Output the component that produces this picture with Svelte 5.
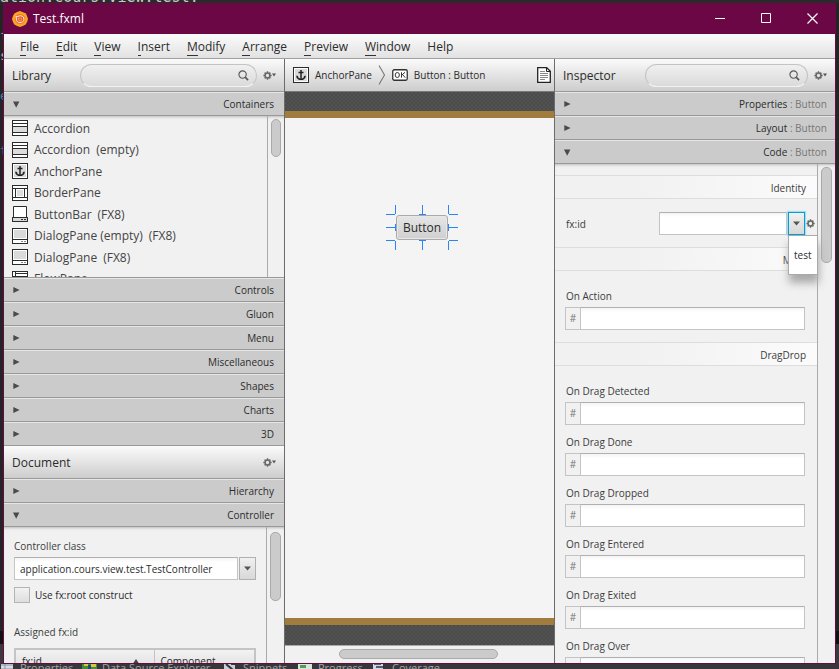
<script>
  const menus = ['File', 'Edit', 'View', 'Insert', 'Modify', 'Arrange', 'Preview', 'Window', 'Help'];
  const containers = [
    { name: 'Accordion', note: '', icon: 'accordion' },
    { name: 'Accordion', note: '(empty)', icon: 'accordion' },
    { name: 'AnchorPane', note: '', icon: 'anchor' },
    { name: 'BorderPane', note: '', icon: 'border' },
    { name: 'ButtonBar', note: '(FX8)', icon: 'bar' },
    { name: 'DialogPane (empty)', note: '(FX8)', icon: 'dialog' },
    { name: 'DialogPane', note: '(FX8)', icon: 'dialog' },
    { name: 'FlowPane', note: '', icon: 'flow' }
  ];
  const categories = ['Controls', 'Gluon', 'Menu', 'Miscellaneous', 'Shapes', 'Charts', '3D'];
  const dragEvents = ['Detected', 'Done', 'Dropped', 'Entered', 'Exited', 'Over'];
  let controllerClass = $state('application.cours.view.test.TestController');
  let fxId = $state('');
</script>

{#snippet gear()}
  <svg width="9" height="9" viewBox="0 0 10 10">
    <circle cx="5" cy="5" r="2.7" fill="none" stroke="#666" stroke-width="1.7" />
    <path d="M5 .4v1.8M5 7.8v1.8M.4 5h1.8M7.8 5h1.8M1.8 1.8l1.2 1.2M7 7l1.2 1.2M8.2 1.8L7 3M3 7L1.8 8.2" stroke="#666" stroke-width="1.6" />
  </svg>
{/snippet}

{#snippet gearMenu(label)}
  <button class="gear" aria-label={label}>
    {@render gear()}
    <svg width="4" height="4" viewBox="0 0 4 4"><path d="M0 .5h4L2 3.5z" fill="#555" /></svg>
  </button>
{/snippet}

{#snippet search(label)}
  <div class="search">
    <input type="search" aria-label={label} />
    <svg width="11" height="11" viewBox="0 0 12 12" fill="none" stroke="#555">
      <circle cx="5" cy="5" r="4" stroke-width="1.2" />
      <path d="M7.8 7.8L11 11" stroke-width="1.8" />
    </svg>
  </div>
{/snippet}

{#snippet section(title, open, suffix)}
  <h2 class="section">
    <button aria-expanded={open}>
      <svg width="7" height="7" viewBox="0 0 7 7">
        <path d={open ? 'M0 .5h6.4L3.2 6.7z' : 'M.3 0v6L6.6 3z'} fill="#4a4a4a" />
      </svg>
      <span>{title}{#if suffix}<span class="suffix">&nbsp;: {suffix}</span>{/if}</span>
    </button>
  </h2>
{/snippet}

{#snippet icon(kind)}
  <svg class="icon" width="16" height="16" viewBox="0 0 16 16">
    {#if kind === 'ok'}
      <rect x=".75" y="2.75" width="14.5" height="10.5" rx="1.5" fill="#fff" stroke="#333" stroke-width="1.3" />
      <ellipse cx="5.3" cy="8" rx="2.1" ry="2.5" fill="none" stroke="#333" />
      <path d="M9.5 5.3v5.4M13 5.3L9.7 8.2M10.6 7.6l2.7 3.1" fill="none" stroke="#333" />
    {:else}
      <rect x=".5" y=".5" width="15" height="15" fill="#fff" stroke="#2b2b2b" />
      {#if kind === 'accordion'}
        <path d="M1 6.5h14v6H1z" fill="#dcdcdc" />
        <path d="M1 3.5h14M1 6.5h14M1 12.5h14" stroke="#2b2b2b" />
      {:else if kind === 'anchor'}
        <path d="M2 2h12v12H2z" fill="#dadada" />
        <path d="M8 3v9M5.5 5.5h5" stroke="#222" stroke-width="1.5" />
        <path d="M4 9.5c.5 1.9 1.9 2.9 4 2.9s3.5-1 4-2.9" fill="none" stroke="#222" stroke-width="1.3" />
        <path d="M3.2 10.6l.5-2.3 1.8 1.5zM12.8 10.6l-.5-2.3-1.8 1.5z" fill="#222" />
      {:else if kind === 'border'}
        <path d="M5 5h6v6H5z" fill="#dcdcdc" />
        <path d="M1 3.5h14M1 12.5h14M3.5 3.5v9M12.5 3.5v9" stroke="#2b2b2b" />
      {:else if kind === 'bar'}
        <path d="M0 0h16v11H0z" fill="#f2f2f2" />
        <path d="M1.5 11V.5h13V11" fill="#fff" stroke="#2b2b2b" />
        <path d="M.5 11.5h15v4H.5z" fill="#d8d8d8" stroke="#2b2b2b" />
        <path d="M9 13.5h2M12 13.5h2" stroke="#2b2b2b" />
      {:else if kind === 'dialog'}
        <path d="M2 2h12v8H2z" fill="#dadada" />
        <path d="M1 11.5h14" stroke="#2b2b2b" />
        <path d="M9 13.5h2M12 13.5h2" stroke="#888" />
      {:else}
        <path d="M3.5 1v14M1 5.5h14M3.5 2.5h12M10.5 5v10" stroke="#2b2b2b" />
      {/if}
    {/if}
  </svg>
{/snippet}

{#snippet handler(label, id)}
  <div class="handler">
    <label for={id}>{label}</label>
    <div class="hash"><span>#</span><input {id} type="text" /></div>
  </div>
{/snippet}

<div class="desktop">
  <div class="editor-line">ation.cours.view.test:</div>
  <div class="edge edge-left"><span>f</span><span>s</span><span class="blue">e</span><span class="blue">t</span></div>

  <div class="window">
    <header class="titlebar">
      <svg width="16" height="16" viewBox="0 0 16 16">
        <path d="M8 0l3 1.2 3 1.4 1.2 2.9L16 8l-.8 2.8-1.5 2.7-2.9 1.4L8 16l-2.9-1.1-2.8-1.4-1.4-2.8L0 8l.9-2.7 1.4-2.8 2.8-1.4z" fill="#f7a823" />
        <circle cx="8" cy="8" r="5.2" fill="#f47b22" />
        <path d="M4 5.5c1.5.9 2.6-.8 4.6-.7 2.2.1 3.5 1.7 3.3 3.5-.2 2-1.9 3.4-4 3.3-2.2-.1-3.6-1.6-3.4-3.7z" fill="#f0532a" stroke="#fff0dc" stroke-width="1" />
        <path d="M6.5 7l3 .3-.4 2.6-2.2-.2z" fill="#e5401c" stroke="#ffd9b8" stroke-width=".6" />
      </svg>
      <h1>Test.fxml</h1>
      <button aria-label="Minimize"><svg width="11" height="11" viewBox="0 0 11 11"><path d="M0 5.5h10" stroke="#fff" /></svg></button>
      <button aria-label="Maximize"><svg width="11" height="11" viewBox="0 0 11 11"><path d="M.5.5h9v9h-9z" fill="none" stroke="#fff" /></svg></button>
      <button aria-label="Close"><svg width="11" height="11" viewBox="0 0 11 11"><path d="M.5.5l10 10M10.5.5l-10 10" stroke="#fff" stroke-width="1.2" /></svg></button>
    </header>

    <nav class="menubar">
      {#each menus as menu}
        <button><span class="key" class:plain={menu === 'Help'}>{menu[0]}</span>{menu.slice(1)}</button>
      {/each}
    </nav>

    <main>
      <div class="left">
        <section class="panel">
          <div class="bar">
            <h2>Library</h2>
            {@render search('Search library')}
            {@render gearMenu('Library options')}
          </div>
          {@render section('Containers', true)}
          <div class="scroller library">
            <ul>
              {#each containers as item}
                <li>{@render icon(item.icon)}<span>{item.name}</span><span>{item.note}</span></li>
              {/each}
            </ul>
            <div class="track"><div class="thumb"></div></div>
          </div>
          {#each categories as category}
            {@render section(category, false)}
          {/each}
        </section>

        <section class="panel">
          <div class="bar">
            <h2>Document</h2>
            {@render gearMenu('Document options')}
          </div>
          {@render section('Hierarchy', false)}
          {@render section('Controller', true)}
          <div class="scroller document">
            <div class="controller">
              <label for="controller-class">Controller class</label>
              <div class="combo">
                <input id="controller-class" type="text" bind:value={controllerClass} />
                <button aria-label="Choose controller class"><svg width="7" height="5" viewBox="0 0 7 5"><path d="M0 .5h7L3.5 4.5z" fill="#555" /></svg></button>
              </div>
              <label class="check"><input type="checkbox" />Use fx:root construct</label>
              <p>Assigned fx:id</p>
              <table>
                <thead>
                  <tr>
                    <th><span>fx:id</span><svg width="8" height="6" viewBox="0 0 8 6"><path d="M0 6h8L4 0z" fill="#444" /></svg></th>
                    <th>Component</th>
                  </tr>
                </thead>
              </table>
            </div>
            <div class="track"><div class="thumb"></div></div>
          </div>
        </section>
      </div>

      <section class="center">
        <div class="bar crumbs">
          <button>{@render icon('anchor')}AnchorPane</button>
          <svg width="8" height="20" viewBox="0 0 8 20"><path d="M1 .5l5.5 9.5L1 19.5" fill="none" stroke="#777" stroke-width="1.1" /></svg>
          <button>{@render icon('ok')}Button : Button</button>
          <button class="page" aria-label="Document">
            <svg width="14" height="16" viewBox="0 0 14 16">
              <path d="M.7.7h9l3.6 3.6v11H.7z" fill="#fff" stroke="#222" stroke-width="1.3" />
              <path d="M9.5.7v3.8h3.8" fill="none" stroke="#222" />
              <path d="M3 4.5h5M3 6.5h8M3 8.5h8M3 10.5h8M3 12.5h5" stroke="#888" />
            </svg>
          </button>
        </div>
        <div class="hatch"></div>
        <div class="canvas">
          <div class="node">
            <button>Button</button>
            <svg width="72" height="45" viewBox="0 0 72 45" fill="none" stroke="#2a86f5" shape-rendering="crispEdges">
              <path d="M0 9.5h9M9.5 0v9M36.5 0v9M33 9.5h7M62.5 0v9M63 9.5h9M0 22.5h9M9.5 19v7M62.5 19v7M63 22.5h9M0 35.5h9M9.5 36v9M33 35.5h7M36.5 36v9M63 35.5h9M62.5 36v9" />
            </svg>
          </div>
        </div>
        <div class="hatch bottom"></div>
        <div class="hscroll"><div class="hthumb"></div></div>
      </section>

      <section class="inspector panel">
        <div class="bar">
          <h2>Inspector</h2>
          {@render search('Search inspector')}
          {@render gearMenu('Inspector options')}
        </div>
        {@render section('Properties', false, 'Button')}
        {@render section('Layout', false, 'Button')}
        {@render section('Code', true, 'Button')}
        <div class="scroller code">
          <div class="props">
            <h3>Identity</h3>
            <div class="fxid">
              <label for="fx-id">fx:id</label>
              <input id="fx-id" type="text" bind:value={fxId} />
              <div class="drop">
                <button aria-label="Show fx:id suggestions"><svg width="7" height="5" viewBox="0 0 7 5"><path d="M0 .5h7L3.5 4.5z" fill="#555" /></svg></button>
                <ul><li>test</li></ul>
              </div>
              <button class="gear" aria-label="fx:id options">{@render gear()}</button>
            </div>
            <h3>Main</h3>
            <div class="group">{@render handler('On Action', 'on-action')}</div>
            <h3>DragDrop</h3>
            <div class="group">
              {#each dragEvents as event}
                {@render handler(`On Drag ${event}`, `on-drag-${event.toLowerCase()}`)}
              {/each}
            </div>
          </div>
          <div class="track"><div class="thumb"></div></div>
        </div>
      </section>
    </main>
  </div>

  <div class="edge"></div>
  <footer class="tabs">
    <span><svg width="16" height="12" viewBox="0 0 16 12"><path d="M1 0h12v12H1z" fill="#d5dbe4" /><path d="M1 4h12M1 8h12M5 0v12" stroke="#8793a5" /></svg>Properties</span>
    <span><svg width="16" height="12" viewBox="0 0 16 12"><path d="M0 1h15v11H0z" fill="#3f8d3b" /><path d="M2 2h4v3H2zM9 3h5v3H9z" fill="#d7c73a" /><path d="M6 4h3v4H6z" fill="#1c4a7a" /></svg>Data Source Explorer</span>
    <span><svg width="16" height="12" viewBox="0 0 16 12"><path d="M1 1h7v3h4v4H1z" fill="#c6cede" /><path d="M3 3l7 6" stroke="#333" stroke-width="2" /></svg>Snippets</span>
    <span><svg width="16" height="12" viewBox="0 0 16 12"><path d="M0 1h14v9H0z" fill="#d7e4e0" /><path d="M2 4h6v3H2z" fill="#4fa04c" /></svg>Progress</span>
    <span><svg width="16" height="12" viewBox="0 0 16 12"><path d="M1 1h10v10H1z" fill="#cfd6ea" /><path d="M2 3h7M4 6h8" stroke="#333" stroke-width="1.5" /></svg>Coverage</span>
  </footer>
</div>

<style>
  :global(body) { margin: 0; background: #2a2a2a; }
  .desktop, .desktop :is(button, input) {
    font-family: 'Open Sans', 'Noto Sans', sans-serif;
    font-size: 10px;
    color: #2b2b2b;
  }
  .desktop {
    display: grid;
    grid-template: 3px minmax(0, 1fr) 5px / 3px minmax(0, 1fr) 3px;
    height: 100vh;
    overflow: hidden;
    background: #2a2a2a;
  }
  .desktop * { box-sizing: border-box; }
  button { padding: 0; margin: 0; border: 0; background: none; }
  h1, h2, h3, p, ul { margin: 0; padding: 0; font-weight: 400; list-style: none; }
  svg { display: block; flex: none; }
  input { min-width: 0; margin: 0; border-radius: 0; outline: 0; }

  .editor-line {
    grid-column: 1 / -1;
    display: flex;
    align-items: end;
    overflow: hidden;
    font: 15px/11px 'DejaVu Sans Mono', monospace;
    color: #c9c9c9;
  }
  .edge { overflow: hidden; background: linear-gradient(#242424 95%, #111 95% 97%, #3a3a3e 97%); }
  .edge-left { display: grid; grid-template-rows: 20px 40px 55px 20px; padding-top: 25px; font: 13px 'DejaVu Sans Mono', monospace; color: #b5b5b5; }
  .blue { color: #2a86a8; }

  .window {
    display: flex;
    flex-direction: column;
    border: 1px solid #6a0a44;
    border-top: 0;
    background: #f1f1f1;
    overflow: hidden;
  }
  .titlebar { display: flex; align-items: center; height: 31px; flex: none; padding-left: 8px; background: #6a0744; }
  .titlebar h1 { flex: 1; padding-left: 5px; font-size: 12px; color: #fff; }
  .titlebar button { display: grid; place-items: center; width: 46px; height: 31px; }

  .menubar {
    display: flex;
    flex: none;
    gap: 17px;
    height: 25px;
    padding: 2px 0 0 16px;
    border-bottom: 1px solid #a0a0a0;
    background: linear-gradient(#fbfbfb, #e2e2e2);
  }
  .menubar button { font-size: 12px; line-height: 17px; }
  .key { display: inline-block; height: 18px; border-bottom: 1px solid #333; }
  .plain { border-color: transparent; }

  main { flex: 1; min-height: 0; display: grid; grid-template-columns: 281px minmax(0, 1fr) 280px; }
  .left { display: grid; grid-template-rows: minmax(0, 387fr) minmax(0, 217fr); border-right: 1px solid #6c6c6c; min-height: 0; }
  .panel, .center { display: flex; flex-direction: column; min-height: 0; min-width: 0; }
  .bar {
    display: flex;
    align-items: center;
    flex: none;
    height: 33px;
    padding: 0 8px;
    border-bottom: 1px solid #999;
    background: linear-gradient(#fbfbfb, #cdcdcd);
  }
  .bar h2 { flex: 1; font-size: 12px; }
  .search { display: flex; align-items: center; width: 177px; height: 23px; border-radius: 12px; border: 1px solid #c4c4c4; border-bottom-color: #f2f2f2; background: linear-gradient(#f0f0f0, #dadada); padding-right: 7px; }
  .search input { flex: 1; height: 20px; border: 0; background: none; appearance: none; }
  .inspector .search { width: 163px; }
  .bar .gear { margin-left: 6px; }
  .gear { display: flex; align-items: center; }

  .section { flex: none; }
  .section button {
    display: flex;
    align-items: center;
    justify-content: space-between;
    width: 100%;
    height: 24px;
    padding: 0 10px 0 9px;
    border-top: 1px solid #e6e6e6;
    border-bottom: 1px solid #999;
    background: #cbcbcb;
    line-height: 16px;
  }
  .inspector .section button { padding-right: 8px; }
  .suffix { color: #777; }

  .scroller { flex: 1; min-height: 0; display: grid; grid-template-columns: minmax(0, 1fr) 18px; overflow: hidden; background: #f1f1f1; box-shadow: inset 0 3px 3px -2px #bbb; }
  .track { border-left: 1px solid #aaa; padding: 3px; }
  .thumb { height: 38px; border: 1px solid #aaa; border-radius: 5px; background: #cbcbcb; }
  .library { grid-template-columns: minmax(0, 1fr) 17px; border-bottom: 1px solid #999; }
  .library ul { min-height: 0; padding-top: 1px; }
  .library li { display: flex; align-items: center; gap: 6px; height: 22px; padding-left: 8px; font-size: 12px; color: #444; }
  .library li:nth-child(even) { height: 21px; }

  .controller { padding: 11px 10px; min-height: 0; }
  .controller > label { display: block; line-height: 16px; color: #3c3c3c; }
  .document .track { padding-top: 5px; }
  .document .thumb { height: 69px; }
  .combo { display: grid; grid-template-columns: minmax(0, 1fr) 17px; gap: 1px; height: 23px; margin-top: 3px; }
  .combo input, .fxid > input, .hash input { height: 23px; padding: 0 5px; border: 1px solid #c4c4c4; border-top-color: #b0b0b0; background: linear-gradient(#f4f4f4, #fff 4px); }
  .combo button, .drop button { display: grid; place-items: center; border: 1px solid #b0b0b0; background: linear-gradient(#f0f0f0, #d8d8d8); }
  .controller .check { display: flex; align-items: center; gap: 5px; margin-top: 7px; color: #2b2b2b; }
  .check input { appearance: none; width: 16px; height: 16px; border: 1px solid #b4b4b4; background: linear-gradient(#f2f2f2, #dedede); }
  .controller p { margin-top: 21px; line-height: 16px; color: #3c3c3c; }
  table { width: 100%; margin-top: 8px; table-layout: fixed; border-collapse: collapse; border: 2px solid #c4c4c4; }
  th { height: 24px; padding: 0 6px; text-align: left; font-weight: 400; border-right: 1px solid #c4c4c4; background: linear-gradient(#f2f2f2, #dcdcdc); }
  th:first-child { width: 139px; }
  th svg { float: right; margin: 5px 8px 0 0; }

  .center { border-right: 1px solid #6c6c6c; }
  .crumbs { border-bottom-color: #777; gap: 6px; padding-right: 3px; }
  .crumbs button { display: flex; align-items: center; gap: 6px; }
  .crumbs .page { margin-left: auto; }
  .hatch { flex: none; height: 19px; background: repeating-conic-gradient(#525252 0 25%, #4b4b4b 0 50%) 0 0 / 4px 4px; }
  .hatch.bottom { height: 20px; }
  .canvas { position: relative; flex: 1; border: solid #a07c3e; border-width: 7px 0; background: #f4f4f4; }
  .node { position: absolute; left: 101px; top: 87px; width: 72px; height: 45px; padding: 10px; }
  .node button { width: 52px; height: 25px; border: 1px solid #aaa; border-radius: 3px; box-shadow: inset 0 0 0 1px #e8e8e8; background: linear-gradient(#e6e6e6, #cfcfcf); font-size: 12px; }
  .node svg { position: absolute; inset: 0; }
  .hscroll { flex: none; height: 18px; padding: 3px 21% 3px 20%; border-top: 1px solid #aaa; }
  .hthumb { height: 10px; border: 1px solid #aaa; border-radius: 5px; background: #cbcbcb; }

  .props { min-height: 0; padding-top: 11px; }
  .code .thumb { height: 96px; }
  h3 { height: 24px; padding-right: 11px; border: solid #ddd; border-width: 1px 0; font-size: 10px; line-height: 24px; text-align: right; color: #3c3c3c; background: linear-gradient(90deg, #f1f1f1 30%, #fbfbfb); }
  .fxid { display: grid; grid-template-columns: minmax(0, 1fr) 129px 17px 10px; align-items: center; padding: 13px 2px 12px 11px; }
  .fxid > input { margin-right: 1px; }
  .fxid label, .handler label { color: #3c3c3c; }
  .drop { position: relative; height: 23px; }
  .drop button { width: 17px; height: 23px; border-color: #039ed3; box-shadow: 0 0 1px 1px #a8dcee; }
  .drop ul { position: absolute; z-index: 1; top: 23px; left: 0; width: 30px; padding: 11px 5px; border: 1px solid #aaa; background: #fff; line-height: 16px; box-shadow: 1px 8px 8px #aaa; }
  .fxid .gear { margin-left: 1px; }
  .group { padding: 8px 12px 12px 10px; }
  .handler label { display: block; margin: 9px 1px 3px; line-height: 16px; }
  .hash { display: grid; grid-template-columns: 15px minmax(0, 1fr); height: 23px; }
  .hash span { border: 1px solid #c4c4c4; border-right: 0; line-height: 21px; text-align: center; color: #777; }

  .tabs { grid-column: 1 / -1; display: grid; grid-template-columns: 82px 141px 75px 74px 1fr; overflow: hidden; background: #37373b; }
  .tabs span { display: flex; gap: 4px; height: 12px; margin-top: -3px; font-size: 11px; line-height: 14px; color: #a5a5a5; white-space: nowrap; }
</style>
